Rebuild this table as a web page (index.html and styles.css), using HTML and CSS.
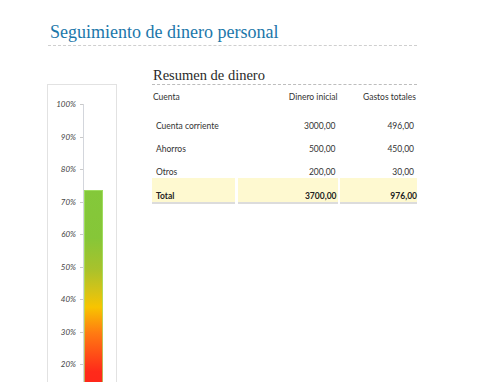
FILE: index.html
```html
<!DOCTYPE html>
<html lang="es">
<head>
<meta charset="utf-8">
<title>Seguimiento de dinero personal</title>
<link rel="stylesheet" href="styles.css">
</head>
<body>
<div class="page">
  <header class="title-block">
    <h1 class="title">Seguimiento de dinero personal</h1>
  </header>
  <div class="content">
    <div class="chart">
      <div class="plot">
        <div class="tick" style="top:0%"><span class="lbl">100%</span></div>
        <div class="tick" style="top:10%"><span class="lbl">90%</span></div>
        <div class="tick" style="top:20%"><span class="lbl">80%</span></div>
        <div class="tick" style="top:30%"><span class="lbl">70%</span></div>
        <div class="tick" style="top:40%"><span class="lbl">60%</span></div>
        <div class="tick" style="top:50%"><span class="lbl">50%</span></div>
        <div class="tick" style="top:60%"><span class="lbl">40%</span></div>
        <div class="tick" style="top:70%"><span class="lbl">30%</span></div>
        <div class="tick" style="top:80%"><span class="lbl">20%</span></div>
        <div class="bar" style="height:73.6%"></div>
      </div>
    </div>
    <section class="summary">
      <h2 class="subtitle">Resumen de dinero</h2>
      <div class="grid">
        <div class="row head">
          <div class="cell">Cuenta</div>
          <div class="cell num">Dinero inicial</div>
          <div class="cell num">Gastos totales</div>
        </div>
        <div class="row data">
          <div class="cell">Cuenta corriente</div>
          <div class="cell num">3000,00</div>
          <div class="cell num">496,00</div>
        </div>
        <div class="row data">
          <div class="cell">Ahorros</div>
          <div class="cell num">500,00</div>
          <div class="cell num">450,00</div>
        </div>
        <div class="row data">
          <div class="cell">Otros</div>
          <div class="cell num">200,00</div>
          <div class="cell num">30,00</div>
        </div>
        <div class="row total">
          <div class="cell">Total</div>
          <div class="cell num">3700,00</div>
          <div class="cell num">976,00</div>
        </div>
      </div>
    </section>
  </div>
</div>
</body>
</html>
```
FILE: styles.css
```css
html, body {
  margin: 0;
  padding: 0;
  background: #ffffff;
  overflow: hidden;
}
.page {
  width: 369px;
  padding-left: 48px;
  font-family: Lato, "Open Sans", sans-serif;
  color: #333;
}
.title-block {
  padding-top: 19px;
  border-bottom: 1px dashed #cfcfcf;
}
.title {
  margin: 0 0 0 2px;
  font-family: "Liberation Serif", serif;
  font-weight: normal;
  font-size: 18px;
  line-height: 26px;
  color: #1b77aa;
}
.content {
  display: flex;
  align-items: flex-start;
  margin-top: 21px;
}
.chart {
  box-sizing: border-box;
  width: 71px;
  height: 300px;
  margin-top: 17px;
  margin-left: -1px;
  border: 1px solid #e2e2e2;
  border-bottom: 0;
  padding-top: 19px;
  padding-left: 35px;
}
.plot {
  position: relative;
  height: 325px;
  border-left: 1px solid #d3d6dc;
}
.tick {
  position: absolute;
  left: -4px;
  width: 3px;
  height: 1px;
  background: #c9c9c9;
}
.lbl {
  position: absolute;
  right: 7px;
  top: -6px;
  font-family: Lato, sans-serif;
  font-style: italic;
  font-size: 8px;
  line-height: 12px;
  color: #444;
  white-space: nowrap;
}
.bar {
  position: absolute;
  left: 0;
  bottom: 0;
  width: 19px;
  box-sizing: border-box;
  border: 1px solid rgba(170, 230, 110, 0.7);
  background-origin: border-box;
  background-image: linear-gradient(to top,
    #ff1a1a 0%,
    #ff2a1a 24%,
    #ff7a12 40%,
    #f8c400 51%,
    #d4c318 58%,
    #a8c22c 67%,
    #86c638 80%,
    #84c83a 100%);
}
.summary {
  margin-left: 35px;
  width: 265px;
}
.subtitle {
  margin: 0;
  font-family: "Liberation Serif", serif;
  font-weight: normal;
  font-size: 14.5px;
  line-height: 17px;
  color: #2a2a2a;
  padding-left: 1px;
  border-bottom: 1px dashed #bdbdbd;
}
.row {
  display: grid;
  grid-template-columns: 83px 100px 77px;
  column-gap: 2.5px;
  font-size: 8.5px;
  color: #333;
}
.cell {
  white-space: nowrap;
}
.num {
  text-align: right;
}
.head {
  height: 24px;
  align-items: center;
}
.head .cell {
  padding-left: 1px;
}
.head .cell:last-child {
  padding-right: 1px;
}
.data {
  height: 23px;
  align-items: end;
  line-height: 12px;
}
.data .cell {
  padding-left: 4px;
}
.data .num {
  padding-right: 2px;
}
.data .cell:last-child {
  padding-right: 3px;
}
.total {
  height: 26px;
  line-height: 12px;
  font-weight: bold;
  color: #222;
}
.total .cell {
  display: flex;
  align-items: flex-end;
  background: #fef9d0;
  border-bottom: 2px solid #dcdcdc;
  padding-left: 4px;
  padding-right: 1px;
}
.total .num {
  justify-content: flex-end;
}
.total .cell:last-child {
  padding-right: 0;
}
```
